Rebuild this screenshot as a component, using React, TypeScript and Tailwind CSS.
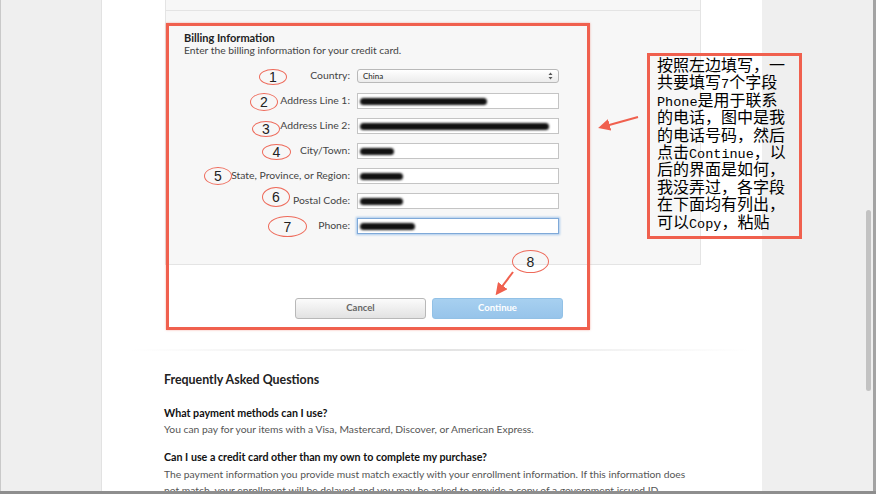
import React from "react";

const RED = "#f0604e";

const rows: { label: string; blob?: number; select?: boolean; focus?: boolean }[] = [
  { label: "Country:", select: true },
  { label: "Address Line 1:", blob: 127 },
  { label: "Address Line 2:", blob: 189 },
  { label: "City/Town:", blob: 34 },
  { label: "State, Province, or Region:", blob: 43 },
  { label: "Postal Code:", blob: 43 },
  { label: "Phone:", blob: 55, focus: true },
];

const marks = [
  { n: "1", cls: "left-[259px] top-[69px] w-[28px] h-[16px]" },
  { n: "2", cls: "left-[250px] top-[93px] w-[28px] h-[18px]" },
  { n: "3", cls: "left-[252px] top-[121px] w-[28px] h-[16px]" },
  { n: "4", cls: "left-[262px] top-[144px] w-[29px] h-[16px]" },
  { n: "5", cls: "left-[204px] top-[167px] w-[28px] h-[18px]" },
  { n: "6", cls: "left-[262px] top-[187px] w-[28px] h-[20px]" },
  { n: "7", cls: "left-[268px] top-[216px] w-[39px] h-[21px]" },
  { n: "8", cls: "left-[512px] top-[250px] w-[37px] h-[23px]" },
];

// note lines, latin parts rendered narrower like the original bitmap font
const note: string[][] = [
  ["按照左边填写，一"],
  ["共要填写", "7", "个字段"],
  ["", "Phone", "是用于联系"],
  ["的电话，图中是我"],
  ["的电话号码，然后"],
  ["点击", "Continue", "，以"],
  ["后的界面是如何，"],
  ["我没弄过，各字段"],
  ["在下面均有列出，"],
  ["可以", "Copy", "，粘贴"],
];

function Field({ blob, select, focus }: { blob?: number; select?: boolean; focus?: boolean }) {
  if (select) {
    return (
      <div className="w-[202px] h-[14px] flex items-center justify-between px-[5px] rounded-[3px] border border-[#b9b9b9] bg-gradient-to-b from-white to-[#ececec] text-[8px] text-[#222]">
        <span>China</span>
        <svg width="5" height="8" viewBox="0 0 5 8">
          <path d="M2.5 0.5 L4.5 3 H0.5 Z M2.5 7.5 L4.5 5 H0.5 Z" fill="#555" />
        </svg>
      </div>
    );
  }
  return (
    <div
      className={
        "w-[202px] h-[16px] flex items-center pl-[2px] bg-white border " +
        (focus ? "border-[#7fa9d8] shadow-[0_0_2px_1px_#a9c9ec]" : "border-[#c4c4c4]")
      }
    >
      <div className="h-[7px] rounded-full bg-[#111] blur-[1.3px]" style={{ width: blob }} />
    </div>
  );
}

export default function App() {
  return (
    <div className="relative w-[876px] h-[494px] overflow-hidden flex flex-col bg-[#efefef] font-['Lato',sans-serif] text-[#333]">
      <div className="flex h-[491px] shrink-0">
        {/* left gutter */}
        <div className="w-[101px] border-l border-[#c9c9c9]" />

        {/* page column */}
        <div className="w-[661px] bg-white border-l border-[#e2e2e2] flex flex-col">
          <div className="ml-[63px] w-[536px] h-[265px] shrink-0 bg-[#f7f7f7] border-x border-b border-[#e4e4e4] flex flex-col">
            <div className="h-[11px] border-b border-[#e4e4e4]" />
            <div className="pl-[18px] pt-[20px]">
              <div className="text-[11px] font-bold text-[#222] leading-[13px]">Billing Information</div>
              <div className="text-[10.3px] text-[#444] leading-[13px]">
                Enter the billing information for your credit card.
              </div>
            </div>
            <div className="mt-[11px] flex flex-col gap-[9px]">
              {rows.map((r) => (
                <div key={r.label} className="flex items-center h-[16px]">
                  <div className="w-[191px] pr-[7px] text-right text-[10.4px] text-[#444] whitespace-nowrap">{r.label}</div>
                  <Field blob={r.blob} select={r.select} focus={r.focus} />
                </div>
              ))}
            </div>
          </div>

          <div className="ml-[63px] w-[536px] shrink-0 flex justify-end gap-[6px] pr-[138px] mt-[33px]">
            <div className="w-[131px] h-[21px] rounded-[3px] border border-[#b8b8b8] bg-gradient-to-b from-[#fbfbfb] to-[#e2e2e2] flex items-center justify-center text-[9.5px] font-bold text-[#666]">
              Cancel
            </div>
            <div className="w-[131px] h-[21px] rounded-[3px] border border-[#92c1e6] bg-gradient-to-b from-[#a7d0f0] to-[#97c4ea] flex items-center justify-center text-[9.5px] font-bold text-white">
              Continue
            </div>
          </div>

          <div className="mt-[30px] ml-[28px] w-[620px] h-[2px] shrink-0 bg-gradient-to-r from-transparent via-[#e3e3e3] to-transparent" />

          <div className="ml-[62px] pt-[22px] w-[532px]">
            <div className="text-[12.4px] font-bold text-[#222] leading-[14px]">Frequently Asked Questions</div>
            <div className="mt-[19px] text-[10.7px] font-bold text-[#111] leading-[13px]">What payment methods can I use?</div>
            <div className="mt-[4px] text-[10.3px] text-[#555] leading-[13px]">
              You can pay for your items with a Visa, Mastercard, Discover, or American Express.
            </div>
            <div className="mt-[14px] text-[10.7px] font-bold text-[#111] leading-[13px]">
              Can I use a credit card other than my own to complete my purchase?
            </div>
            <div className="mt-[3px] text-[10.3px] text-[#555] leading-[16px]">
              The payment information you provide must match exactly with your enrollment information. If this information does not match, your enrollment will be delayed and you may be asked to provide a copy of a government issued ID.
            </div>
          </div>
        </div>

        {/* right gutter with scrollbar */}
        <div className="flex-1 flex justify-end">
          <div className="w-[5px] h-[181px] mt-[210px] mr-[2px] rounded-full bg-[#c2c2c2]" />
          <div className="w-[3px] bg-[#a3a3a3]" />
        </div>
      </div>
      <div className="h-[3px] bg-[#8e8e8e]" />

      {/* annotations drawn over the screenshot */}
      <div className="absolute left-[166px] top-[23px] w-[424px] h-[307px] border-[3px] border-[#f0604e] shadow-[0_0_2px_#f0604e80]" />

      {marks.map((m) => (
        <div
          key={m.n}
          className={"absolute rounded-[50%] border-[1.5px] border-[#ee6a5a] flex items-center justify-center text-[14px] leading-none text-[#222] font-['Liberation_Sans',sans-serif] " + m.cls}
        >
          {m.n}
        </div>
      ))}

      <div className="absolute left-[647px] top-[53px] w-[155px] h-[186px] border-[3px] border-[#f0604e] pl-[7px] pt-0 font-['Noto_Sans_CJK_SC',sans-serif] text-[16px] text-black">
        {note.map((line, i) => (
          <div key={i} className="whitespace-nowrap h-[17.4px] leading-[17.4px] overflow-visible flex items-baseline">
            {line.map((seg, j) =>
              j % 2 === 1 ? (
                <span key={j} className="font-['Liberation_Mono',monospace] text-[13.5px] leading-[17.4px]">
                  {seg}
                </span>
              ) : (
                <span key={j} className="leading-[17.4px]">{seg}</span>
              )
            )}
          </div>
        ))}
      </div>

      <svg className="absolute left-0 top-0 pointer-events-none" width="876" height="494">
        <defs>
          <marker id="ah" markerWidth="6" markerHeight="6" refX="4" refY="3" orient="auto">
            <path d="M0 0 L6 3 L0 6 Z" fill={RED} />
          </marker>
        </defs>
        <line x1="638" y1="117" x2="602" y2="127" stroke={RED} strokeWidth="2" markerEnd="url(#ah)" />
        <line x1="513" y1="272" x2="498" y2="292" stroke={RED} strokeWidth="2" markerEnd="url(#ah)" />
      </svg>
    </div>
  );
}
